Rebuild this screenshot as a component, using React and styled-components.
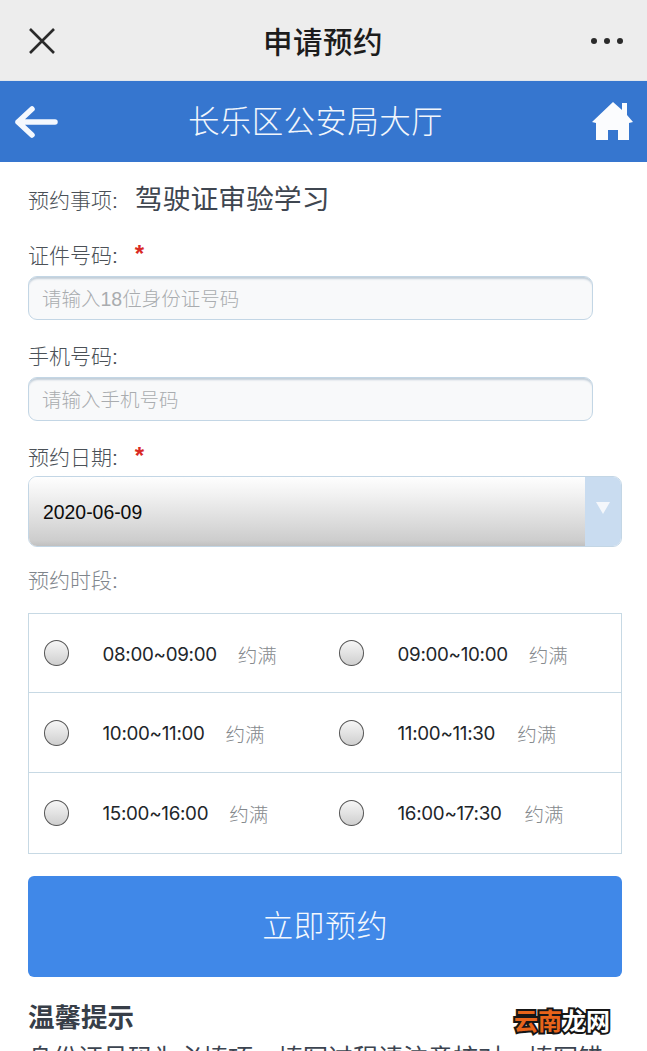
import React from 'react'
import styled, { createGlobalStyle } from 'styled-components'

const CJK = '"Liberation Sans", "Noto Sans CJK SC", sans-serif'

const GlobalStyle = createGlobalStyle`
  html, body {
    margin: 0;
    padding: 0;
    height: 1051px;
    overflow: hidden;
    background: #fff;
  }
  * { box-sizing: border-box; }
`

const Page = styled.div`
  position: relative;
  width: 647px;
  height: 1051px;
  overflow: hidden;
  font-family: ${CJK};
`

const WechatBar = styled.header`
  display: flex;
  align-items: center;
  justify-content: space-between;
  height: 81px;
  padding: 1px 23px 0 28px;
  background: #ededed;
  border-bottom: 1px solid #e2e6ec;
`

const WechatTitle = styled.h1`
  margin: -1px 0 0;
  font-size: 29.5px;
  font-weight: 500;
  letter-spacing: 0.5px;
  color: #1c1c1c;
`

const NavBar = styled.nav`
  display: flex;
  align-items: center;
  justify-content: space-between;
  height: 81px;
  padding: 0 14px;
  background: #3676cf;
`

const NavTitle = styled.div`
  margin-left: -18px;
  padding-bottom: 5px;
  font-size: 31.5px;
  font-weight: 300;
  letter-spacing: 0.4px;
  color: #f2f6fc;
`

const Form = styled.main`
  display: flex;
  flex-direction: column;
  padding: 0 26px 0 28px;
`

const ItemRow = styled.div`
  display: flex;
  align-items: center;
  gap: 17px;
  height: 74px;
  padding-bottom: 5px;
`

const Label = styled.label`
  display: flex;
  align-items: center;
  height: 38px;
  padding-bottom: 3px;
  font-size: 21px;
  font-weight: 300;
  color: ${p => (p.$muted ? '#80868c' : '#4b5157')};
`

const ItemLabel = styled(Label)`
  padding: 5px 0 0;
`

const ItemValue = styled.span`
  font-size: 27.8px;
  font-weight: 400;
  color: #3f4650;
`

const Star = styled.span`
  margin-left: 17px;
  font-size: 24px;
  font-weight: 700;
  line-height: 1;
  color: #d92a24;
`

const TextInput = styled.input`
  display: block;
  width: 565px;
  height: 44px;
  margin: 2px 0 17px;
  padding: 2px 13px 0;
  font-family: ${CJK};
  font-size: 19.5px;
  font-weight: 300;
  background: #f8f9fa;
  border: 1.5px solid #c3d6e5;
  border-radius: 9px;
  box-shadow: inset 0 3px 2px -1px #c2ced9;
  outline: none;
  &::placeholder { color: #a9acaf; opacity: 1; }
`

const SelectBox = styled.div`
  display: flex;
  width: 594px;
  height: 71px;
  overflow: hidden;
  border: 1.5px solid #c3d6e5;
  border-radius: 9px;
`

const SelectValue = styled.div`
  flex: 1;
  display: flex;
  align-items: center;
  padding: 2px 0 0 14px;
  font-size: 19.4px;
  color: #0c0c0c;
  background: linear-gradient(#fefefe, #f2f2f2 25%, #cdcdcd 92%, #c0c0c0);
`

const SelectArrow = styled.div`
  display: flex;
  justify-content: center;
  width: 36px;
  padding-top: 24px;
  background: #c9dcf0;
`

const SlotLabel = styled(Label)`
  height: 66px;
`

const SlotTable = styled.div`
  width: 594px;
  border: 1.5px solid #c7d9e4;
`

const SlotRow = styled.div`
  display: grid;
  grid-template-columns: 295px 1fr;
  height: ${p => p.$h}px;
  border-top: ${p => (p.$first ? 'none' : '1.5px solid #c7d9e4')};
`

const Slot = styled.div`
  display: flex;
  align-items: center;
  padding-left: 14.5px;
`

const Radio = styled.span`
  flex: none;
  width: 25px;
  height: 26px;
  border: 1.5px solid #555;
  border-radius: 50%;
  background: linear-gradient(#f6f6f6, #cfcfcf);
`

const SlotTime = styled.span`
  margin: 2px 0 0 34px;
  font-family: Inter, ${CJK};
  font-size: 18.8px;
  letter-spacing: -0.3px;
  color: #22262a;
`

const SlotState = styled.span`
  margin: 2px 0 0 ${p => p.$gap}px;
  font-size: 19.5px;
  font-weight: 300;
  color: #85898d;
`

const SubmitButton = styled.button`
  width: 594px;
  height: 101px;
  margin-top: 22px;
  padding: 0 0 6px;
  font-family: ${CJK};
  font-size: 31px;
  font-weight: 300;
  letter-spacing: 0.4px;
  color: #f4f8fe;
  background: #4088e8;
  border: none;
  border-radius: 6px;
`

const TipsTitle = styled.h2`
  margin: 24px 0 0;
  font-size: 26.5px;
  line-height: 34px;
  font-weight: 700;
  color: #373e48;
`

const TipsText = styled.p`
  margin: 5px 0 0;
  font-size: 25px;
  line-height: 36px;
  font-weight: 400;
  white-space: nowrap;
  color: #3c4450;
`

const Watermark = styled.div`
  position: absolute;
  left: 514px;
  top: 1007px;
  font-size: 24px;
  line-height: 30px;
  font-weight: 700;
  white-space: nowrap;
  paint-order: stroke fill;
  -webkit-text-stroke: 4px #161616;
`

const WatermarkPart = styled.span`
  color: ${p => p.$color};
  paint-order: stroke fill;
`

const CloseIcon = () => (
  <svg width="28" height="28" viewBox="0 0 28 28" fill="none" stroke="#2a2a2a" strokeWidth="2.6">
    <path d="M2 2 L26 26 M26 2 L2 26" />
  </svg>
)

const MoreIcon = () => (
  <svg width="34" height="8" viewBox="0 0 34 8" fill="#2a2a2a">
    <circle cx="4" cy="4" r="3" />
    <circle cx="17" cy="4" r="3" />
    <circle cx="30" cy="4" r="3" />
  </svg>
)

const BackIcon = () => (
  <svg width="44" height="36" viewBox="0 0 44 36" fill="none" stroke="#f4f8fe" strokeWidth="5.5" strokeLinecap="round" strokeLinejoin="round">
    <path d="M41 18 H4 M18 5 L4 18 L18 31" />
  </svg>
)

const HomeIcon = () => (
  <svg width="42" height="40" viewBox="0 0 42 40" fill="#fbfcfe">
    <path d="M22 0 L31 8 V1 H36 V13 L42 20 L38 21 V38 H27 V28 H17 V38 H5 V21 L1 20 Z" />
  </svg>
)

const ArrowIcon = () => (
  <svg width="14" height="14" viewBox="0 0 14 14" fill="#f4f7fb">
    <path d="M0 1 H14 L7 13 Z" />
  </svg>
)

const slots = [
  { h: 78, first: true, items: [['08:00~09:00', 21], ['09:00~10:00', 21]] },
  { h: 80, items: [['10:00~11:00', 21], ['11:00~11:30', 22]] },
  { h: 80.5, items: [['15:00~16:00', 21], ['16:00~17:30', 23]] },
]

export default function App () {
  return (
    <Page>
      <GlobalStyle />
      <WechatBar>
        <CloseIcon />
        <WechatTitle>申请预约</WechatTitle>
        <MoreIcon />
      </WechatBar>
      <NavBar>
        <BackIcon />
        <NavTitle>长乐区公安局大厅</NavTitle>
        <HomeIcon />
      </NavBar>
      <Form>
        <ItemRow>
          <ItemLabel>预约事项:</ItemLabel>
          <ItemValue>驾驶证审验学习</ItemValue>
        </ItemRow>
        <Label>证件号码:<Star>*</Star></Label>
        <TextInput placeholder='请输入18位身份证号码' />
        <Label>手机号码:</Label>
        <TextInput placeholder='请输入手机号码' />
        <Label>预约日期:<Star>*</Star></Label>
        <SelectBox>
          <SelectValue>2020-06-09</SelectValue>
          <SelectArrow><ArrowIcon /></SelectArrow>
        </SelectBox>
        <SlotLabel $muted>预约时段:</SlotLabel>
        <SlotTable>
          {slots.map(row => (
            <SlotRow key={row.items[0][0]} $h={row.h} $first={row.first}>
              {row.items.map(([time, gap]) => (
                <Slot key={time}>
                  <Radio />
                  <SlotTime>{time}</SlotTime>
                  <SlotState $gap={gap}>约满</SlotState>
                </Slot>
              ))}
            </SlotRow>
          ))}
        </SlotTable>
        <SubmitButton>立即预约</SubmitButton>
        <TipsTitle>温馨提示</TipsTitle>
        <TipsText>身份证号码为必填项，填写过程请注意核对，填写错</TipsText>
      </Form>
      <Watermark>
        <WatermarkPart $color='#e8641a'>云南</WatermarkPart>
        <WatermarkPart $color='#fff'>龙网</WatermarkPart>
      </Watermark>
    </Page>
  )
}
